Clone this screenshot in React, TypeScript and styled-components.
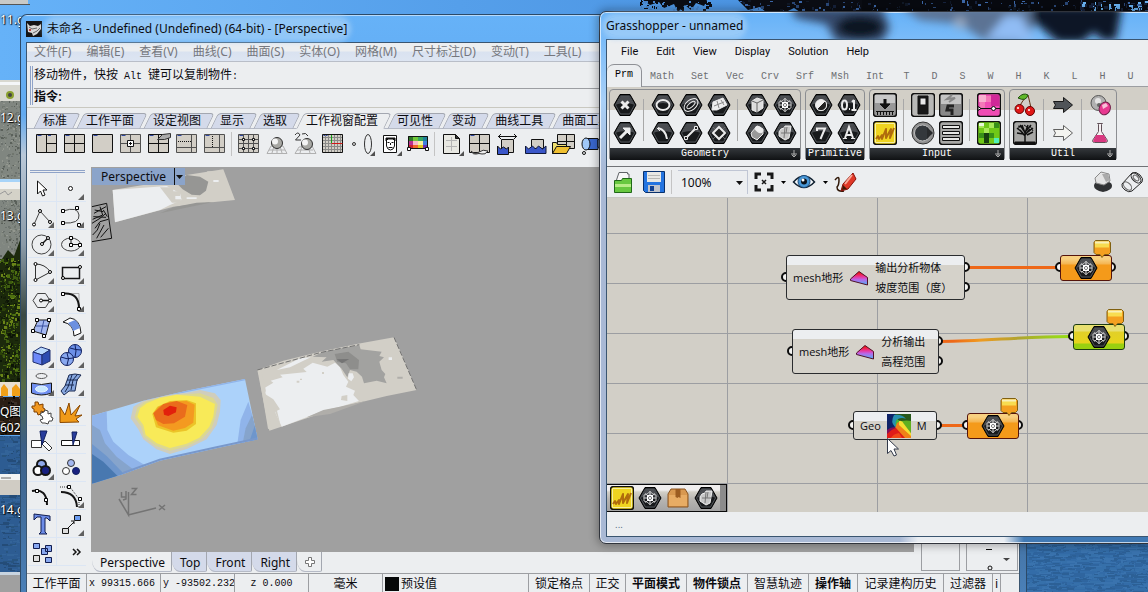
import React from "react";
import styled, { createGlobalStyle, css } from "styled-components";

const GlobalStyle = createGlobalStyle`
  * { box-sizing: border-box; }
  html, body { margin: 0; height: 100%; overflow: hidden; }
  body { font: 12px/16px "Noto Sans", "Noto Sans CJK SC", sans-serif; color: #0c0c10; }
  button, input, select { font: inherit; color: inherit; margin: 0; padding: 0; border: 0; background: none; }
  svg { display: block; }
`;

const ui = `"Noto Sans", "Noto Sans CJK SC", sans-serif`;
const song = `"Liberation Sans", "Noto Sans CJK SC", sans-serif`;
const face = "#eceef0";
const line = "#9c9ea2";
const stone = "#d2cfc7";

/* ---------- desktop ---------- */

const Desktop = styled.main`
  position: relative;
  height: 100vh;
  overflow: hidden;
  background: #5fa9f2;
`;

const Wallpaper = styled.svg`
  position: absolute;
  inset: 0;
  width: 100%;
  height: 100%;
`;

const DesktopLabel = styled.span<{ $top: number }>`
  position: absolute;
  left: 0;
  top: ${(p) => p.$top}px;
  color: #fff;
  text-shadow: 0 0 2px #000, 1px 1px 1px #000;
  white-space: nowrap;
`;

/* ---------- shared window parts ---------- */

const Frame = styled.section`
  position: absolute;
  display: flex;
  flex-direction: column;
  border: 1px solid #2c4a68;
  border-radius: 7px 7px 0 0;
`;

const RhinoFrame = styled(Frame)`
  left: 20px;
  top: 14px;
  right: 121px;
  bottom: -2px;
  padding: 0 6px 0 5px;
  border-bottom: 0;
  background:
    linear-gradient(#ffffff88, #ffffff88) 0 0 / 100% 1px no-repeat,
    linear-gradient(#66b2f8 0, #62aaf0 100px, #b9c8d8 140px, #8a9aa8 230px, #3a4a44 300px, #566b46 370px, #3c5f86 430px, #4a80b8 578px);
`;

const GrassFrame = styled(Frame)`
  left: 599px;
  top: 11px;
  right: -8px;
  bottom: 48px;
  padding: 0 6px 6px;
  border-color: #30343c;
  border-radius: 7px;
  box-shadow: 0 0 9px 2px rgba(0, 0, 0, 0.3), inset 0 0 0 1px #ffffffb0;
  background:
    linear-gradient(90deg, #a9b9d5 300px, #e9edf2 318px, #e9edf2 404px, #4079b4 424px) 0 100% / 100% 7px no-repeat,
    linear-gradient(#66b2f8, #a9d0f8 90px, #a9b9d5 160px);
`;

const TitleBar = styled.header<{ $h: number }>`
  position: relative;
  display: flex;
  align-items: center;
  gap: 5px;
  height: ${(p) => p.$h}px;
  flex: none;
  white-space: nowrap;
`;

const TitleText = styled.h1`
  position: relative;
  margin: 0;
  font: 12px/18px ${ui};
  border-radius: 9px;
  background: #a8d2f8aa;
  box-shadow: 0 0 5px 4px #a8d2f8aa;
`;

const TitleGlass = styled.svg`
  position: absolute;
  left: 0;
  top: 0;
  width: 100%;
  height: 100%;
`;

const Client = styled.div`
  display: flex;
  flex-direction: column;
  flex: 1;
  min-height: 0;
  border: 1px solid #3a5570;
  border-bottom-width: 0;
  background: ${face};
`;

const GrassClient = styled(Client)`
  border-bottom-width: 1px;
`;

const IconButton = styled.button<{ $w?: number; $h?: number }>`
  display: flex;
  align-items: center;
  justify-content: center;
  flex: none;
  width: ${(p) => p.$w ?? 28}px;
  height: ${(p) => p.$h ?? 28}px;
`;

/* ---------- Rhino ---------- */

const RhinoMenu = styled.nav`
  display: flex;
  gap: 15px;
  height: 19px;
  flex: none;
  padding: 0 7px;
  border-bottom: 1px solid #b9bec8;
  background: linear-gradient(#eceef0 8px, #d9e2f0 9px, #dde5f2);
  overflow: hidden;
  white-space: nowrap;
  color: #75777d;
  line-height: 18px;
`;

const MenuButton = styled.button`
  flex: none;
`;

const CommandArea = styled.form`
  display: flex;
  flex-direction: column;
  flex: none;
  height: 46px;
  padding-left: 3px;
  border-bottom: 1px solid #c9c8c0;
`;

const CommandGrip = styled.div`
  display: flex;
  flex-direction: column;
  flex: 1;
  margin: 4px 0 2px;
  padding-left: 1px;
  border-left: 3px double #8fa3c8;
  font-family: ${song};
`;

const History = styled.div`
  height: 23px;
  padding: 0 0 2px;
  border-bottom: 1px solid ${line};
  line-height: 18px;
  white-space: nowrap;
`;

const Mono = styled.span`
  font: 10px/16px "Liberation Mono", monospace;
  white-space: pre;
`;

const Prompt = styled.label`
  display: flex;
  align-items: center;
  gap: 4px;
  height: 15px;
  font-weight: 700;
`;

const CommandInput = styled.input`
  flex: 1;
  outline: 0;
`;

const TabStrip = styled.div`
  display: flex;
  flex: none;
  height: 21px;
  padding: 5px 0 0 8px;
  overflow: hidden;
  box-shadow: inset 0 -1px #b5bac6;
`;

const ToolTab = styled.button<{ $on?: boolean }>`
  position: relative;
  flex: none;
  height: 16px;
  padding: 0 11px 0 8px;
  font: 12px/16px ${song};
  z-index: ${(p) => (p.$on ? 1 : 0)};
  isolation: isolate;
  &::before {
    content: "";
    position: absolute;
    z-index: -1;
    inset: 0 1px 0 2px;
    transform: skewX(-26deg);
    border: 1px solid #a3a7b0;
    border-bottom-color: ${(p) => (p.$on ? face : "#b5bac6")};
    border-radius: 4px 4px 0 0;
    background: ${(p) => (p.$on ? face : "#d4daea")};
  }
`;

const Toolbar = styled.div`
  display: flex;
  align-items: center;
  flex: none;
  height: 31px;
  padding: 0 0 2px 6px;
  overflow: hidden;
`;

const ToolSep = styled.i`
  flex: none;
  width: 1px;
  height: 24px;
  margin: 0 3px 0 2px;
  background: #c4c4c4;
`;

const RhinoBody = styled.div`
  display: flex;
  flex: 1;
  min-height: 0;
`;

const ToolBox = styled.div`
  flex: none;
  width: 64px;
  padding: 10px 0 0 1px;
`;

const ToolRule = styled.div`
  height: 3px;
  margin: 0 6px 1px 2px;
  border: solid #8fa3c8;
  border-width: 1px 0;
`;

const ToolGrid = styled.div`
  display: grid;
  grid-template-columns: 29px 29px;
  grid-auto-rows: 28px;
`;

const ToolCell = styled.button`
  display: flex;
  align-items: center;
  justify-content: center;
  border-bottom: 1px solid #dce6f4;
  &:nth-child(odd) { border-right: 1px solid #dce6f4; }
`;

const ViewColumn = styled.div`
  display: flex;
  flex-direction: column;
  flex: 1;
  min-width: 0;
  padding-top: 7px;
`;

const Viewport = styled.div`
  position: relative;
  flex: 1;
  overflow: hidden;
  background: #a0a0a0;
`;

const ViewLabel = styled.div`
  position: absolute;
  left: 1px;
  top: 1px;
  display: flex;
  height: 17px;
  background: #8ba4ca;
  line-height: 17px;
`;

const ViewName = styled.span`
  padding: 0 8px 0 9px;
  border-right: 1px solid #111;
`;

const ViewTabs = styled.div`
  display: flex;
  flex: none;
  height: 21px;
  padding-left: 1px;
  line-height: 20px;
`;

const ViewTab = styled.button<{ $on?: boolean }>`
  flex: none;
  height: 20px;
  padding: 1px 6px 0 8px;
  border-right: 1px solid #a3a7b0;
  border-bottom: 1px solid #b5bac6;
  border-bottom-left-radius: 8px 12px;
  border-bottom-right-radius: 2px;
  background: ${(p) => (p.$on ? face : "#d4daea")};
`;

const SidePanels = styled.div`
  display: flex;
  align-items: flex-end;
  flex: none;
  gap: 6px;
  width: 105px;
  padding: 0 1px 2px 7px;
`;

const SidePanel = styled.div<{ $w: number }>`
  width: ${(p) => p.$w}px;
  height: 60px;
  border: 1px solid ${line};
  background: ${face};
`;

const StatusBar = styled.footer`
  display: flex;
  flex: none;
  height: 21px;
  border-top: 1px solid ${line};
  font: 12px/21px ${song};
  white-space: nowrap;
  overflow: hidden;
`;

const statusCell = css<{ $w: number; $bold?: boolean; $left?: boolean }>`
  flex: none;
  display: flex;
  align-items: center;
  gap: 2px;
  justify-content: ${(p) => (p.$left ? "flex-start" : "center")};
  width: ${(p) => p.$w}px;
  padding: 0 2px;
  border-right: 1px solid ${line};
  font-weight: ${(p) => (p.$bold ? 700 : 400)};
  overflow: hidden;
`;

const StatusCell = styled.span`${statusCell}`;
const StatusToggle = styled.button`${statusCell}`;

const Swatch = styled.i`
  width: 14px;
  height: 14px;
  background: #060808;
`;

/* ---------- Grasshopper ---------- */

const GrassMenu = styled.nav`
  display: flex;
  gap: 18px;
  flex: none;
  height: 23px;
  padding: 0 14px;
  font: 11px/24px Roboto, sans-serif;
`;

const Categories = styled.div`
  display: flex;
  flex: none;
  height: 24px;
  padding-top: 1px;
  overflow: hidden;
  box-shadow: inset 0 -1px ${line};
`;

const Category = styled.button<{ $on?: boolean }>`
  flex: none;
  min-width: 28px;
  height: 23px;
  padding: 1px 8px 0;
  border: solid transparent;
  border-width: 1px 1px 0 0;
  font: 10px/16px "Liberation Mono", monospace;
  color: #6c6e72;
  ${(p) =>
    p.$on &&
    css`
      padding-top: 0;
      padding-bottom: 2px;
      border-color: #8f9196;
      border-radius: 7px 7px 0 0;
      background: ${face};
      color: #000;
    `}
`;

const Ribbon = styled.div`
  display: flex;
  align-items: flex-start;
  gap: 4px;
  flex: none;
  height: 80px;
  padding: 2px;
  border-bottom: 1px solid #707276;
  background: linear-gradient(${stone} 23px, ${face} 23px);
`;

const RibbonPanel = styled.section`
  flex: none;
  height: 71px;
  padding: 1px;
  border: 1px solid #8c8e92;
  border-radius: 4px 4px 2px 2px;
`;

const RibbonIcons = styled.div`
  display: flex;
  height: 56px;
`;

const RibbonGroup = styled.div<{ $cols: number }>`
  display: grid;
  grid-auto-flow: row;
  grid-template-columns: repeat(${(p) => p.$cols}, 28px);
  grid-template-rows: 28px 28px;
  & + & {
    padding-left: 10px;
    background: linear-gradient(#a8a8a8, #a8a8a8) 4px 8px / 1px 42px no-repeat;
  }
`;

const RibbonTitle = styled.h2`
  position: relative;
  margin: 1px -1px 0;
  height: 12px;
  background: linear-gradient(#34383c, #101214);
  color: #fff;
  text-align: center;
  font: 10px/11px "Liberation Mono", monospace;
`;

const More = styled.button`
  position: absolute;
  right: 2px;
  top: 2px;
`;

const CanvasBar = styled.div`
  display: flex;
  align-items: center;
  flex: none;
  height: 31px;
  padding: 0 2px 0 0;
  border-bottom: 1px solid #c8c8c4;
`;

const Grow = styled.div`
  flex: 1;
`;

const ZoomBox = styled.label`
  position: relative;
  display: flex;
  align-items: center;
  width: 70px;
  height: 24px;
  margin: 0 2px 0 3px;
  border: solid #c0c6d4;
  border-width: 1px 1px 0 0;
  & select {
    width: 100%;
    height: 22px;
    padding-left: 3px;
    appearance: none;
    outline: 0;
  }
  & svg {
    position: absolute;
    right: 4px;
    top: 10px;
    pointer-events: none;
  }
`;

const Canvas = styled.div`
  position: relative;
  flex: 1;
  overflow: hidden;
  background:
    linear-gradient(90deg, ${line} 1px, transparent 1px) 120px 0 / 150px 100%,
    linear-gradient(${line} 1px, transparent 1px) 0 35px / 100% 50px,
    ${stone};
`;

const CanvasLayer = styled.svg`
  position: absolute;
  inset: 0;
  width: 100%;
  height: 100%;
  pointer-events: none;
`;

const NodeBox = styled.article<{ $x: number; $y: number; $w: number; $h: number }>`
  position: absolute;
  left: ${(p) => p.$x}px;
  top: ${(p) => p.$y}px;
  width: ${(p) => p.$w}px;
  height: ${(p) => p.$h}px;
  display: flex;
  align-items: center;
  justify-content: space-between;
  gap: 6px;
  padding: 0 6px;
  border: 1px solid #2a2c2e;
  border-radius: 3px;
  background: linear-gradient(${face} 9px, #d5d2ca 9px);
  font: 11px/20px "Open Sans", "Noto Sans CJK SC", sans-serif;
  white-space: nowrap;
`;

const Outputs = styled.div`
  display: flex;
  flex-direction: column;
  flex: 1;
`;

const ParamBox = styled.article<{ $x: number; $y: number; $selected?: boolean }>`
  position: absolute;
  left: ${(p) => p.$x}px;
  top: ${(p) => p.$y}px;
  display: flex;
  align-items: center;
  justify-content: center;
  width: 52px;
  height: 26px;
  border: 1px solid ${(p) => (p.$selected ? "#1c3c10" : "#54140c")};
  border-radius: 3px;
  background: ${(p) =>
    p.$selected
      ? "linear-gradient(#e8e070 6px, #e2d028 7px, #e6d41c 18px, #98d010 19px)"
      : "linear-gradient(#f8d080 3px, #f4b450 8px, #f49a1a 9px, #f49a1a)"};
`;

const Recent = styled.div`
  position: absolute;
  left: 0;
  bottom: 0;
  display: flex;
  align-items: center;
  width: 120px;
  height: 28px;
  padding-left: 1px;
  border: 1px solid #0a0a0a;
  border-left: 0;
  background: linear-gradient(90deg, transparent 113px, #8c8c8c 113px), linear-gradient(#f0eeee 5px, ${stone} 7px, #b8b6b2 14px, #a4a4a4);
`;

const GrassStatus = styled.footer`
  flex: none;
  height: 24px;
  padding: 0 8px;
  font: 10px/26px Roboto, sans-serif;
  color: #5a7088;
`;

/* ---------- drawings ---------- */

const rand = (seed: number) => () => {
  seed = (seed * 16807) % 2147483647;
  return seed / 2147483647;
};

const Specks = ({ seed, n, x, y, w, h, colors, s = 2, sx = 1 }: {
  seed: number; n: number; x: number; y: number; w: number; h: number; colors: string[]; s?: number; sx?: number;
}) => {
  const r = rand(seed);
  return (
    <g>
      {Array.from({ length: n }, (_, i) => (
        <rect
          key={i}
          x={Math.round(x + r() * w)}
          y={Math.round(y + r() * h)}
          width={Math.ceil(r() * s * sx)}
          height={Math.ceil(r() * s)}
          fill={colors[Math.floor(r() * colors.length)]}
        />
      ))}
    </g>
  );
};

const Scenery = () => (
  <Wallpaper aria-hidden>
    <defs>
      <linearGradient id="sky" x1="0" x2="1">
        <stop offset="0" stopColor="#66b2f8" />
        <stop offset=".4" stopColor="#559fea" />
        <stop offset="1" stopColor="#3f86d8" />
      </linearGradient>
    </defs>
    <rect width="100%" height="100" fill="url(#sky)" />
    <rect width="28" height="4" fill="#c9cac8" />
    <rect y="4" width="30" height="1" fill="#555" />
    <rect y="100" width="24" height="160" fill="#808680" />
    <Specks seed={7} n={520} x={0} y={100} w={22} h={160} s={2} colors={["#6c726e", "#949890", "#70766e", "#868c84", "#5a605a"]} />
    <path d="M0 262L8 250L14 256L22 235V392H0z" fill="#1c2a0c" />
    <Specks seed={11} n={560} x={0} y={258} w={22} h={130} s={3} colors={["#0c1406", "#3e5c10", "#4e7010", "#2c4208", "#6a8418", "#1a280a", "#141e08"]} />
    <rect y="382" width="24" height="14" fill="#e8e0d0" />
    <path d="M1 396V388l3-4l4 5v7zM12 396v-8l4-4l4 5v7z" fill="#f0a018" />
    <rect y="397" width="24" height="38" fill="#2a1e14" />
    <Specks seed={5} n={60} x={0} y={396} w={22} h={38} s={3} colors={["#0a0806", "#5a4030", "#3c3028"]} />
    <rect y="436" width="100%" height="160" fill="#2d5c92" />
    <Specks seed={3} n={260} x={0} y={436} w={22} h={156} s={2} sx={4} colors={["#28547f", "#336499", "#244c78"]} />
    <rect x="1020" y="530" width="100%" height="80" fill="#336ca8" />
    <Specks seed={21} n={1100} x={1024} y={542} w={128} h={52} s={2} sx={6} colors={["#2f659f", "#3a73ae", "#2c6096", "#3670aa"]} />
    <g>
      <rect x="-2" y="80" width="22" height="21" fill="#d8d8d0" />
      <rect x="-2" y="82" width="22" height="3" fill="#f4f6f8" />
      <circle cx="10" cy="95" r="4" fill="#8aa030" /><circle cx="10" cy="95" r="2" fill="#444" />
      <rect x="-2" y="180" width="22" height="20" fill="#d4d2c8" />
      <rect x="-2" y="179" width="22" height="3" fill="#a8d4f8" />
      <rect x="-2" y="182" width="22" height="7" fill="#f2f2f0" />
      <path d="M0 194l5-3l3 4l4-3" stroke="#999" fill="none" />
      <rect x="-2" y="474" width="22" height="21" fill="#d0ccc4" />
      <rect x="-2" y="474" width="22" height="6" fill="#f2f4f4" />
      <path d="M1 478h10" stroke="#666" />
      <rect x="-2" y="573" width="22" height="19" fill="#a0a0a0" />
      <rect x="-2" y="572" width="22" height="3" fill="#c8d4e0" />
    </g>
    <path d="M643 0h64l-3 6-8-3-5 7-6-5-7 7-4-8-10 4-5-6-9 3zM738 0H1148V12H800l-6-4-8 4H766l-6-5-12 3z" fill="#0b0d14" />
    <rect x="862" width="300" height="13" fill="#080a10" />
    <Specks seed={31} n={150} x={740} y={0} w={408} h={11} s={3} colors={["#2a4878", "#16223c", "#3c68a8", "#101826"]} />
    <Specks seed={17} n={60} x={640} y={0} w={70} h={9} s={3} colors={["#0b0d14", "#4a88d0"]} />
    <Specks seed={13} n={50} x={1080} y={0} w={68} h={9} s={4} colors={["#6ab4f4", "#16223c"]} />
  </Wallpaper>
);

const RhinoLogo = () => (
  <svg width="16" height="16" viewBox="0 0 16 16">
    <rect width="16" height="16" fill="#141414" />
    <path d="M1 2l3 3 4-1 4 1 3-2v5l-4 5-4 2-1-3-4-1z" fill="#d8d8d6" />
    <path d="M3 6l3 2 5-1M7 12l4-2 3-3" stroke="#666" fill="none" />
    <path d="M3 8h2v2H3z" fill="#c04040" />
  </svg>
);

const Pane = ({ children, dim }: { children?: React.ReactNode; dim?: boolean }) => (
  <svg width="24" height="24" viewBox="0 0 24 24" fill="none" stroke={dim ? "#505050" : "#111"}>
    <path d="M1.5 2.5h20v18h-20z" fill="#d2cec6" />
    <path d="M2.5 3.5h4" stroke="#3048a0" />
    {children}
  </svg>
);

const Water = () => <path d="M1.500 14l3 3 4-3 3 3 3-3 4 3 3.500-3v7.500h-20.500z" fill="#3a56c8" stroke="#101838" />;

const topTools: { name: string; w?: number; icon: React.ReactNode }[] = [
  { name: "三个工作视窗", icon: <Pane><path d="M11.5 2.5v18M11.5 11.5h10" /><path d="M13 3.500h3" stroke="#3048a0" /></Pane> },
  { name: "四个工作视窗", icon: <Pane><path d="M11.5 2.5v18M1.5 11.5h20" /></Pane> },
  { name: "最大化", icon: <Pane /> },
  { name: "新增", icon: <Pane dim><path d="M11.5 2.5v18M1.5 11.5h20" /><path d="M8.5 8.5h6v6h-6z" fill="#fff" stroke="#111" /><path d="M10 11.5h3M11.5 10v3" stroke="#111" /></Pane> },
  { name: "属性", icon: <Pane><path d="M11.5 2.5v18M1.5 11.5h20" /><path d="M10.500 7.500l5-5 8-1v4l-6 2z" fill="#aaa" stroke="#333" /></Pane> },
  { name: "水平分割", icon: <Pane dim><path d="M16.5 2.5v18M1.5 15.5h20" /><path d="M3 9.5h13" stroke="#111" strokeDasharray="1 1" /></Pane> },
  { name: "垂直分割", icon: <Pane dim><path d="M16.5 2.5v18M1.5 15.5h20" /><path d="M9.500 4v11" stroke="#111" strokeDasharray="1 1" /></Pane> },
  { name: "|", icon: null },
  { name: "锁定", icon: <Pane dim><path d="M6.5 2.5v18M16.500 2.5v18M1.500 7.5h20M1.500 16.500h20M11.500 3v17M2 11.500h19" /><path d="M5.500 6.500h2v2h-2zM15.500 6.500h2v2h-2zM5.500 15.500h2v2h-2zM15.500 15.500h2v2h-2z" fill="#fff" stroke="#111" /></Pane> },
  { name: "着色", icon: <svg width="24" height="24" viewBox="0 0 24 24"><path d="M6 14L2 21.500h20L18 14zM4 18h16M9 14L7 21M15 14l2 7M12 14v7" stroke="#b0b0b0" fill="none" /><circle cx="12" cy="11" r="5.500" fill="#a8a8a4" stroke="#303030" /><circle cx="10" cy="9.500" r="3" fill="#f4f4f4" /></svg> },
  { name: "复制显示", icon: <svg width="24" height="24" viewBox="0 0 24 24"><path d="M6 15L2 21.500h21L19 14zM4 18h16M9 14L7 21M15 14l2 7" stroke="#b0b0b0" fill="none" /><path d="M2 3q3-4 5 0L2.500 8H8M9 2q4-2 6 2" stroke="#333" fill="none" /><circle cx="14" cy="12" r="5.500" fill="#a8a8a4" stroke="#303030" /><circle cx="12" cy="10.500" r="3" fill="#f4f4f4" /></svg> },
  { name: "网格线", icon: <Pane><path d="M4.500 3v17M7.500 3v17M10.500 3v17M13.500 3v17M16.500 3v17M19.500 3v17M2 5.500h19M2 8.500h19M2 11.500h19M2 14.500h19M2 17.500h19" stroke="#8a8a88" /><path d="M10.500 3v8" stroke="#18a018" /><path d="M10.500 11.500h11" stroke="#d01818" /></Pane> },
  { name: "点", w: 14, icon: <svg width="10" height="24"><circle cx="5" cy="12" r="1.500" fill="#ddd" stroke="#333" /></svg> },
  { name: "镜头", w: 16, icon: <svg width="16" height="28" fill="none"><ellipse cx="7" cy="14" rx="3.500" ry="9.500" stroke="#333" /><path d="M14 21v5H9z" fill="#505050" /></svg> },
  { name: "图像", w: 27, icon: <svg width="26" height="28" fill="none" stroke="#111"><path d="M5.500 5.500h13v17h-13z" fill="#fff" /><path d="M8.500 10v6q1 4 4 4t4-4v-6" /><path d="M8 8h9v3l-2-2h-5l-2 2z" fill="#111" /><path d="M9.500 12.500h2M13.500 12.500h2M12.500 13v2M10.500 17.500h4" /><path d="M24 21v5h-5z" fill="#505050" stroke="none" /></svg> },
  { name: "背景图", icon: <svg width="24" height="24" viewBox="0 0 24 24"><path d="M2 4h5v5H2z" fill="#307828" /><path d="M7 4h5v5H7z" fill="#70c838" /><path d="M12 4h5v5h-5z" fill="#38a860" /><path d="M17 4h5v5h-5z" fill="#208098" /><path d="M2 9h5v4H2z" fill="#b83090" /><path d="M7 9h5v4H7z" fill="#f8b8c8" /><path d="M12 9h5v4h-5z" fill="#f8f0a0" /><path d="M17 9h5v4h-5z" fill="#4080e0" /><path d="M2 13h5v4H2z" fill="#c82030" /><path d="M7 13h5v4H7z" fill="#f06828" /><path d="M12 13h5v4h-5z" fill="#e0c820" /><path d="M17 13h5v4h-5z" fill="#7030b0" /><path d="M2.500 4.500h19v12h-19z" fill="none" stroke="#111" /><path d="M1.500 15.500h3v3h-3zM19.500 15.500h3v3h-3z" fill="#fff" stroke="#111" /></svg> },
  { name: "|", icon: null },
  { name: "新页面", icon: <svg width="28" height="28" fill="none" stroke="#111"><path d="M5.500 4.500h12l4 4v15h-16z" fill="#e8e8e2" /><path d="M17.500 4.500v4h4z" fill="#333" /><path d="M8 10.500h11M8 16.500h11M13.500 7v14" stroke="#b4b4b4" /><path d="M26 21v5h-5z" fill="#505050" stroke="none" /></svg> },
  { name: "同步", icon: <Pane><path d="M11.500 2.500v18M1.500 11.500h20" /><path d="M3 19q4 4 8 1t9-1q-3 4-6 3t-6 0-5-3z" fill="#eee" stroke="#333" /></Pane> },
  { name: "宽度", icon: <svg width="24" height="24" fill="none" stroke="#111"><path d="M2 4.500h19M5 2L2.500 4.500L5 7M18 2l2.500 2.500L18 7" /><path d="M5.500 7.500h12v13h-12z" fill="#d2cec6" /><path d="M1.500 14l3 3 3-2 3 2 2-2v7.500h-11z" fill="#3a56c8" /></svg> },
  { name: "底部", icon: <svg width="24" height="24" fill="none" stroke="#111"><path d="M7.500 7.500h12v9h-12z" fill="#d2cec6" /><Water /></svg> },
  { name: "打开", icon: <svg width="26" height="24" fill="none" stroke="#111"><path d="M6.500 2.500h17v14h-17zM15.500 3v13M7 9.500h17" fill="#d2cec6" /><path d="M1.500 10.500h4l1 2h9v9h-14z" fill="#f0e070" /><path d="M1.500 21.500l4-7h14l-4 7z" fill="#f0c030" /></svg> },
  { name: "摄像机", icon: <svg width="26" height="24" fill="none" stroke="#111"><path d="M8 6.500h11v11H8z" fill="#3a68d0" /><path d="M19 8l5-4v14l-5-3z" fill="#88b0e8" /><ellipse cx="7" cy="12" rx="4" ry="6" fill="#a0c8f8" /><circle cx="5" cy="21" r="1.500" /></svg> },
];

const Cell = ({ children, corner = true }: { children: React.ReactNode; corner?: boolean }) => (
  <svg width="28" height="28" viewBox="0 0 28 28" fill="none" stroke="#151515">
    {children}
    {corner && <path d="M26 20v6h-6z" fill="#606060" stroke="none" />}
  </svg>
);

const Sq = ({ p }: { p: number[][] }) => (
  <>{p.map(([x, y]) => <path key={`${x}-${y}`} d={`M${x - 1.5} ${y - 1.5}h3v3h-3z`} fill="#fff" stroke="#000" />)}</>
);

const Dots = ({ p }: { p: number[][] }) => (
  <>{p.map(([x, y]) => <circle key={`${x}-${y}`} cx={x} cy={y} r="1.500" fill="#fff" stroke="#000" />)}</>
);

const sideTools: [string, React.ReactNode][] = [
  ["选取", <Cell corner={false}><path d="M9.500 7v13l3-3 2 5 2.500-1-2-5h4z" fill="#fff" /></Cell>],
  ["点", <Cell><circle cx="12.500" cy="14.500" r="2" fill="#fff" /></Cell>],
  ["多重直线", <Cell><path d="M6 22.500L12 9l10 11" stroke="#444" /><Dots p={[[6, 22.5], [12, 9], [22, 20]]} /></Cell>],
  ["曲线", <Cell><path d="M5 9q15-5 16 4t-16 8" stroke="#444" /><Sq p={[[5, 9], [19, 6], [5, 21], [21, 23]]} /></Cell>],
  ["圆", <Cell><circle cx="13.500" cy="14.500" r="9.500" stroke="#444" /><path d="M14 14l6-6" strokeWidth="1.500" /><Dots p={[[14, 14], [20, 8]]} /></Cell>],
  ["椭圆", <Cell><ellipse cx="13" cy="14.500" rx="9.500" ry="6.500" stroke="#444" /><path d="M13 14.500h9M13 14V8" /><Sq p={[[13, 15], [22, 15], [13, 8]]} /></Cell>],
  ["圆弧", <Cell><path d="M7.500 6v16l15-8Q17 6 7.500 6" stroke="#333" /><Dots p={[[7.5, 6], [7.5, 22], [22, 14]]} /></Cell>],
  ["矩形", <Cell><path d="M4.500 9.500h17v11h-17z" strokeWidth="1.500" /><Dots p={[[5, 20], [22, 9]]} /></Cell>],
  ["多边形", <Cell><path d="M9.500 7.500h8l4.500 7-4.500 7h-8L5 14.500z" stroke="#444" /><path d="M13 14.500h9" strokeWidth="1.500" /><Dots p={[[13, 14.5], [22, 14.5]]} /></Cell>],
  ["圆角", <Cell><path d="M6 7.500h15v15" stroke="#aaa" /><path d="M6 7.500q15-1 15 15" strokeWidth="2" /><Sq p={[[5, 8], [21, 23]]} /></Cell>],
  ["曲面", <Cell><path d="M10 6h12l-4 15L5 17z" fill="#a4b8f0" /><path d="M16 6l-3 13M8 12h12" stroke="#3850a0" /><Sq p={[[9, 6], [21, 6], [16, 22], [5, 17]]} /></Cell>],
  ["弯曲", <Cell><path d="M5 8l7-4q10 1 11 15l-7 3q0-12-11-14z" fill="#fff" /><path d="M10 9l7-3q4 3 5 8l-7 3q-1-5-5-8z" fill="#6c90e0" stroke="none" /></Cell>],
  ["立方体", <Cell><path d="M5 10l8-5 9 3-8 5z" fill="#b8d8fc" stroke="#203070" /><path d="M5 10l9 3v10l-9-3z" fill="#6c88f8" stroke="#203070" /><path d="M14 13l8-5v11l-8 4z" fill="#2c4cb0" stroke="#203070" /></Cell>],
  ["球体", <Cell><circle cx="17" cy="9" r="6.500" fill="#6c90e8" stroke="#102060" /><path d="M12 6q6 2 11 2M17 3q2 6 0 12" stroke="#102060" /><circle cx="9" cy="17" r="6.500" fill="#88a8f0" stroke="#102060" /><path d="M3 15q6 3 12 1M9 11q3 6 0 12" stroke="#102060" /></Cell>],
  ["投影", <Cell><ellipse cx="13.500" cy="6" rx="5.500" ry="2.500" stroke="#555" /><path d="M3.500 13q10 3 20 0v10q-10 4-20 0z" fill="#6f8ff0" /><ellipse cx="13.500" cy="19" rx="6" ry="3" fill="#c8e8ff" stroke="#e8f4ff" /></Cell>],
  ["网格", <Cell><path d="M3 21l4-5 4-11 6-1 6 1-4 5-2 11-6 0-5 4z" fill="#88a8e0" stroke="#182850" /><path d="M7 15h9M9 10h11M14 5l-4 12-3 5M19 5l-4 5-2 10" stroke="#182850" /></Cell>],
  ["拼图", <Cell corner={false}><path d="M4 8l3 0 0-4 3 0 1 3 4-1 0 4 2 1-1 3-3-1 0 3-3 1-1-3-3 0 0-3-2-1z" fill="#f09820" stroke="#804000" /><path d="M13 15l3-1 1-2 3 1 0 3 3-1 0 4 2 1-1 3-3 0-1 3-3-1-3 0-2-3 3-1-1-3-2-1z" fill="#fff" stroke="#444" /></Cell>],
  ["炸开", <Cell corner={false}><path d="M2 24.500V9l5 8 4-12 2 12 9-10-5 11 7-1-6 4 3 3-19 .5z" fill="#f09a18" stroke="#8a4800" /></Cell>],
  ["修剪", <Cell corner={false}><path d="M3.500 14.500h10v7h-10zM14 18l3-3 7 7-3 3z" fill="#fff" stroke="#333" /><path d="M12 5h7l-5 14z" fill="#283c9c" stroke="#102060" /></Cell>],
  ["分割", <Cell corner={false}><path d="M3.500 14.500h18v5h-18z" fill="#fff" /><path d="M14 6h5l-4 13z" fill="#283c9c" stroke="#102060" /></Cell>],
  ["群组", <Cell><circle cx="13.500" cy="10.500" r="4.500" fill="#90a8e8" strokeWidth="2" /><circle cx="10" cy="16.500" r="4.500" fill="#fff" strokeWidth="2" /><circle cx="17.500" cy="16.500" r="4.500" fill="#182080" strokeWidth="2" /></Cell>],
  ["解散群组", <Cell corner={false}><circle cx="13" cy="9" r="3.500" fill="#a4b8f0" stroke="#333" /><circle cx="8" cy="17" r="3.500" fill="#fff" stroke="#333" /><circle cx="18" cy="17" r="3.500" fill="#182080" stroke="#102060" /></Cell>],
  ["编辑点", <Cell corner={false}><path d="M4 9q15-3 15 14" strokeWidth="2" /><Sq p={[[9, 9], [18, 18]]} /></Cell>],
  ["控制点", <Cell><path d="M3 10q15 0 16 15" strokeWidth="2" /><path d="M2 5h10l9 12v8" strokeDasharray="1 1" stroke="#333" /><Sq p={[[11, 5], [22, 17]]} /></Cell>],
  ["文字", <Cell corner={false}><path d="M6 4l16 2v5l-3-3-2 0v14l2 2h-8l2-2V7L9 7 6 10z" fill="#6c8ce8" stroke="#101c50" /></Cell>],
  ["移动", <Cell><path d="M10 18l6-6M13 11h3v3" /><path d="M4.500 18.500h6v5h-6z" fill="#ddd" /><path d="M16.500 5.500h6v5h-6z" fill="#6c9cf0" /></Cell>],
  ["阵列", <Cell corner={false}><path d="M5.500 5.500h6v5h-6zM17.500 7.500h6v6h-6zM13.500 10.500h6v6h-6zM17.500 19.500h6v5h-6z" fill="#88a8f0" stroke="#101c50" /><path d="M5.500 17.500h6v6h-6z" fill="#ddd" /></Cell>],
  ["更多", <Cell corner={false}><path d="M15 11l3 3-3 3M19 11l3 3-3 3" strokeWidth="1.500" /></Cell>],
];

const Scene = () => (
  <CanvasLayer aria-hidden>
    <g transform="translate(-91 -167)">
      <g transform="translate(0 160) scale(.3333)">
        <path d="M338 90L430 75L560 45L670 28L705 120L620 128L520 140L345 187z" fill={stone} />
        <path d="M338 90L500 78L540 100L545 120L510 135L480 150L345 187z" fill={face} />
        <path d="M560 45L600 50L625 65L618 92L600 106L575 104L548 88L530 70zM480 160L520 142L590 128L640 126z" fill="#969694" />
        <path d="M480 82h40v12h20v14h-14v10h20l-10 10h-20zM620 34h30v8h-20zM640 60h20l-6 8z" fill={stone} />
        <path d="M640 60h16v6h-16zM560 112h30v5h-30z" fill={face} />
        <path d="M276 140L320 130L335 235L276 245M282 160L318 140M278 178L308 165L300 140M285 205L300 185L325 178M290 235L312 195M302 232L325 205M278 225L292 210L300 190M276 190L300 175L318 160M284 150L310 155M280 170L318 172M310 150L322 170" fill="none" stroke="#101010" strokeWidth="3" />
      </g>
      <clipPath id="heat"><path d="M276 137L430 92L560 62L735 27L773 208L650 235L480 272L370 312L276 341z" /></clipPath>
      <g transform="translate(0 370) scale(.3333)">
        <g clipPath="url(#heat)">
          <rect x="270" width="520" height="360" fill="#acd2fa" />
          <path d="M276 130L320 122L322 180L340 215L385 255L445 292L276 341z" fill="#90b4ea" />
          <path d="M276 165L300 180L315 220L350 260L405 302L276 345z" fill="#86a4cc" />
          <path d="M276 222L320 258L375 315L276 345z" fill="#6e96cc" />
          <path d="M276 252L310 275L355 320L276 345z" fill="#4878b0" />
          <path d="M745 95L722 150L712 222L780 212z" fill="#90b4ea" />
          <path d="M756 135L737 175L728 220L780 212z" fill="#86a4cc" />
          <path d="M765 165L748 215L780 212z" fill="#6e96cc" />
          <path d="M773 208L650 235L480 272L370 312" stroke="#7898cc" strokeWidth="12" fill="none" />
          <path d="M735 27L560 62L430 92" stroke="#90b4ea" strokeWidth="8" fill="none" />
          <path d="M430 92L500 75L560 68L600 60L645 70L662 90L660 125L650 165L620 208L560 237L510 252L470 238L430 208L415 178L392 145L400 110z" fill="#cfcdbc" />
          <path d="M434 96L480 82L530 74L600 70L640 84L653 105L645 145L635 175L605 207L562 229L510 242L468 228L432 200L424 170L404 142L412 113z" fill="#dcd890" />
          <path d="M440 100L480 84L530 74L600 80L645 102L640 140L628 170L598 203L560 221L510 234L470 220L437 195L430 165L412 140L420 115z" fill="#f8ea58" />
          <path d="M457 132L472 110L510 93L560 90L588 100L588 162L560 182L520 188L468 172z" fill="#ecc428" />
          <path d="M460 130L476 110L510 95L560 93L584 104L580 158L555 174L520 182L474 166z" fill="#f49a20" />
          <path d="M460 130L490 102L530 93L562 105L555 140L522 160L490 162L468 150z" fill="#ea6c1c" />
          <path d="M490 120L510 107L530 112L528 127L505 138L492 134z" fill="#e2200c" />
        </g>
      </g>
      <g transform="translate(240 320) scale(.3333)">
        <path d="M52 150L130 122L240 95L350 72L462 52L482 95L530 210L440 228L300 262L200 295L88 332z" fill={stone} />
        <path d="M72 205L100 188L92 182L128 172L120 164L200 156L190 146L218 128L262 140L285 128L300 142L310 165L325 185L318 200L345 212L340 225L357 243L300 260L250 272L200 292L125 320L105 275L120 268L100 238L75 222zM110 150L180 115L212 112L150 142z" fill={face} />
        <path d="M218 110L250 95L358 75L362 88L425 95L418 108L432 112L418 125L425 150L436 162L432 172L440 190L410 182L372 190L366 170L350 155L330 150L322 172L305 146L280 120L245 125L260 112z" fill="#a2a2a0" />
        <path d="M284 102L325 95L357 120L355 148L330 148L318 130L292 126z" fill="#8e8e8c" />
        <path d="M290 118L328 117L306 130z" fill="#747474" />
        <path d="M326 160h12l4 12-8 12-10-8zM446 112h10v8h-10z" fill={face} />
        <path d="M56 160L66 158L96 330L84 326zM305 228L322 225L322 243L303 240zM62 190L72 180L78 215L68 210zM110 268L100 260L122 318z" fill={stone} />
        <path d="M200 292L250 270L300 260L380 242L270 282zM472 170h16v6h-16z" fill="#b0aeaa" />
        <path d="M52 150L240 98L358 74M462 52L485 105L530 210" stroke="#707070" strokeWidth="3" fill="none" strokeDasharray="16 6" />
        <path d="M170 182h8v6h-8zM180 176h6v4h-6zM246 156h6v6h-6z" fill={stone} />
      </g>
      <g stroke="#747474" fill="none">
        <path d="M128.500 492V515L119 499M128 515L156 508" strokeWidth="1.500" />
        <path d="M131.500 488.500h5l-5 6h5M159 505l6 5M165 505l-6 5M121.500 492v5l4 0M126 491v8l-3 1" strokeWidth="1.500" />
      </g>
    </g>
  </CanvasLayer>
);

const Hex = ({ children }: { children: React.ReactNode }) => (
  <svg width="24" height="24" viewBox="0 0 24 24">
    <path d="M1 12L7 1.500h10L23 12l-6 10.500H7z" fill="#181a1c" stroke="#000" strokeLinejoin="round" />
    <path d="M3 11.500L8 3h8l5 8.500q-9-3-18 0z" fill="#4a4c50" />
    <path d="M2.500 12L7.500 3h9l5 9-5 9h-9z" fill="none" stroke="#505458" />
    <g fill="none" stroke="#ececec">{children}</g>
  </svg>
);

const MeshGlyph = () => (
  <Hex>
    <path d="M12 5v14M5.500 12h13M7.500 7.500l9 9M16.500 7.500l-9 9" />
    <path d="M12 5.500l-3 2.500M12 5.500l3 2.500M12 18.500l-3-2.500M12 18.500l3-2.500M9 8l-3 1v6l3 1M15 8l3 1v6l-3 1" stroke="#b8b8b8" />
    <path d="M9.500 9.500h5v5h-5z" stroke="#fff" />
  </Hex>
);
const PatchGlyph = () => <Hex><path d="M8 8l3-1 1-2h6l-2 12-4 2-6-4 0-4z" fill="#c8c8c8" stroke="#eee" /><path d="M12 6l-1 11M8 12h9M14 6l-1 6" stroke="#777" /></Hex>;

const Tile = ({ bg, children }: { bg: string; children?: React.ReactNode }) => (
  <svg width="24" height="24" viewBox="0 0 24 24" fill="none" stroke="#101010">
    <rect x=".5" y=".5" width="23" height="23" rx="3" fill={bg} strokeWidth="1.500" />
    {children}
  </svg>
);

const Scribble = () => (
  <Tile bg="#f0d420">
    <path d="M2.500 2.500h19v19h-19z" stroke="#f8f0a0" />
    <path d="M3 18l2-3 1 3 3-4v4l4-10v9l5-9-1 9 4-10" stroke="#b06c0c" strokeWidth="2" strokeLinejoin="round" />
  </Tile>
);

type RibbonItem = [string, React.ReactNode];
const ribbon: { title: string; more: boolean; groups: { cols: number; items: RibbonItem[] }[] }[] = [
  {
    title: "Geometry",
    more: true,
    groups: [
      { cols: 1, items: [
        ["Point", <Hex><path d="M8.500 8.500l7 7M15.500 8.500l-7 7" strokeWidth="3" /></Hex>],
        ["Vector", <Hex><path d="M7 17l7-7" strokeWidth="3" /><path d="M10 7h7v7z" fill="#eee" /></Hex>],
      ] },
      { cols: 3, items: [
        ["Circle", <Hex><ellipse cx="12" cy="12" rx="6.500" ry="5" strokeWidth="2" /></Hex>],
        ["Curve", <Hex><ellipse cx="12" cy="12" rx="8" ry="5" transform="rotate(-40 12 12)" /><ellipse cx="12" cy="12" rx="5" ry="2" transform="rotate(-40 12 12)" /></Hex>],
        ["Plane", <Hex><path d="M6 9l10-4 4 7-10 5-5 0z" fill="#eee" /><path d="M10 8l2 7M14 7l3 5M7 13l10-4" stroke="#888" /></Hex>],
        ["Arc", <Hex><path d="M7 7q8 2 9 11" strokeWidth="2" /><path d="M6 7l3 3" /></Hex>],
        ["Line", <Hex><path d="M7 17L17 7" strokeWidth="2" /><path d="M5.500 15.500h3v3h-3zM15.500 5.500h3v3h-3z" fill="#222" /></Hex>],
        ["Rectangle", <Hex><path d="M6 6l12 12M18 6L6 18" stroke="#666" /><path d="M12 6l6 6-6 6-6-6z" strokeWidth="2" fill="#222" /></Hex>],
      ] },
      { cols: 2, items: [
        ["Box", <Hex><path d="M7 8l5-3 6 2v8l-6 4-5-2z" fill="#ddd" /><path d="M7 8l5 2 6-3M12 10v9" stroke="#666" /></Hex>],
        ["Mesh", <MeshGlyph />],
        ["Brep", <Hex><path d="M6 12l6-7 6 3 0 5-6 6-5-3z" fill="#999" /><ellipse cx="14" cy="8.500" rx="4" ry="2.500" transform="rotate(35 14 8.500)" fill="#eee" /></Hex>],
        ["Surface", <PatchGlyph />],
      ] },
    ],
  },
  {
    title: "Primitive",
    more: false,
    groups: [
      { cols: 2, items: [
        ["Boolean", <Hex><circle cx="12" cy="12" r="5.500" fill="#eee" /><path d="M16 8a5.500 5.500 0 01-8 8z" fill="#222" /></Hex>],
        ["Number", <Hex><ellipse cx="7.500" cy="12" rx="2.500" ry="4.500" strokeWidth="2" /><path d="M17 7v10M15 9l2-2M14.500 17h5M12 16h1" strokeWidth="2" /></Hex>],
        ["Integer", <Hex><path d="M8 10V7.500h8L11.500 18" strokeWidth="2" /></Hex>],
        ["Text", <Hex><path d="M8 17l4-11 4 11M9 14h6" strokeWidth="2" /><path d="M6 17.500h4M14 17.500h4" /></Hex>],
      ] },
    ],
  },
  {
    title: "Input",
    more: true,
    groups: [
      { cols: 1, items: [
        ["Slider", <Tile bg="#989898"><path d="M2 2h20v8H2z" fill="#c8c8c8" stroke="none" /><path d="M12 6v6" strokeWidth="3" /><path d="M7 11h10l-5 5z" fill="#111" /><path d="M3 18.500h18M4.500 18v4M7.500 18v4M10.500 18v4M13.500 18v4M16.500 18v4M19.500 18v4" /></Tile>],
        ["Panel", <Scribble />],
      ] },
      { cols: 2, items: [
        ["Toggle", <Tile bg="#b8b8b6"><path d="M7 3h10v18H7z" fill="#181818" /><path d="M9 5h6v7H9z" fill="#e8e8e8" /></Tile>],
        ["Graph", <Tile bg="#888"><path d="M2 2h20v9H2z" fill="#c4c4c4" stroke="none" /><path d="M13 2l-5 4 8-1-6 4" stroke="#888" strokeWidth="2" /><path d="M15 13H9l-1 4h5v5" stroke="#222" strokeWidth="3" /></Tile>],
        ["Knob", <svg width="24" height="24"><circle cx="12" cy="12" r="11" fill="#909090" stroke="#333" /><circle cx="11.500" cy="12" r="8" fill="#34383c" stroke="#c0c0c0" /><path d="M16 6l6 6-6 6z" fill="#282a2c" /></svg>],
        ["List", <Tile bg="#a8a8a6"><path d="M3.500 4.500h17v3h-17zM3.500 10.500h17v3h-17zM3.500 16.500h17v3h-17z" fill="#e8e8e6" /></Tile>],
      ] },
      { cols: 1, items: [
        ["Gradient", <Tile bg="#f04cb4"><path d="M2 2h7v7H2z" fill="#f8b0d0" stroke="none" /><path d="M9 3h6v6H9zM3 9h5v6H3z" fill="#f478b8" stroke="none" /><path d="M14 2h8v11h-8z" fill="#d02898" stroke="none" /><path d="M1 15.500h22" /><path d="M1 13.500l3 2-3 2z" fill="#fff" /><circle cx="16.500" cy="15.500" r="2" fill="#fff" /></Tile>],
        ["Swatch", <Tile bg="#70c818"><path d="M2 2h5v5H2zM12 2h5v5h-5zM7 7h5v5H7z" fill="#a8e858" stroke="none" /><path d="M2 2h5v3H2z" fill="#e8f8d8" stroke="none" /><path d="M7 12h5v10H7z" fill="#184010" stroke="none" /><path d="M17 2h5v5h-5zM2 12h5v5H2zM12 12h5v5h-5z" fill="#389018" stroke="none" /><path d="M17 17h5v5h-5z" fill="#50f0b8" stroke="none" /></Tile>],
      ] },
    ],
  },
  {
    title: "Util",
    more: true,
    groups: [
      { cols: 1, items: [
        ["Cherry Picker", <svg width="24" height="24" fill="none"><path d="M15 2q-6 6-9 12M15 2q2 8 3 13" stroke="#603010" /><path d="M5 5q5-6 10-3-2 7-10 3z" fill="#60b828" stroke="#205010" /><circle cx="6.500" cy="16" r="4.500" fill="#e01818" stroke="#600" /><circle cx="17" cy="18" r="4.500" fill="#e01818" stroke="#600" /><circle cx="5" cy="15" r="1" fill="#fff" /><circle cx="16" cy="17" r="1" fill="#fff" /></svg>],
        ["Param Viewer", <Tile bg="#a8a8a6"><path d="M12 21V11M12 15L7 9M12 14l5-6M12 12L9 4M12 12l3-8M4 12l6 1M20 11l-6 3M4 7l6 5M20 7l-5 4M7 4l4 6M18 4l-5 6" strokeWidth="1.500" /><path d="M4 8l4-3M20 10l-3-5M5 5l3 1M11 4l3 2" /><path d="M2 21h20v2H2z" fill="#111" /></Tile>],
      ] },
      { cols: 1, items: [
        ["Data Input", <svg width="24" height="24"><path d="M2.500 8.500h10v-4l9 7.500-9 7.500v-4h-10l2-3.500z" fill="#505458" stroke="#181818" /></svg>],
        ["Data Output", <svg width="24" height="24"><path d="M2.500 8.500h10v-4l9 7.500-9 7.500v-4h-10l2-3.500z" fill="#f4f4f0" stroke="#606060" /></svg>],
      ] },
      { cols: 1, items: [
        ["Relay", <svg width="24" height="24"><circle cx="9.500" cy="10" r="7.500" fill="#b0b0b0" stroke="#555" /><circle cx="9" cy="8" r="3" fill="#e4e4e4" /><circle cx="10" cy="12" r="2" fill="#666" /><ellipse cx="16" cy="15.500" rx="5.500" ry="6.500" fill="#e83890" stroke="#702048" transform="rotate(25 16 15)" /><path d="M13 12l4-2 2 3-5 3z" fill="#f8c0d8" /></svg>],
        ["Galapagos", <svg width="24" height="24"><path d="M8.500 2.500h5l-1 1v7l6 9q0 2-2 2h-11q-2 0-2-2l6-9v-7z" fill="#f6f0f2" stroke="#605058" /><path d="M7 14h8l3 6q0 1-1.500 1h-11Q4 21 4 20z" fill="#d83880" /></svg>],
      ] },
    ],
  },
];

const Arrow = () => <svg width="7" height="4"><path d="M0 0h7L3.500 4z" fill="#111" /></svg>;

const OpenIcon = () => (
  <svg width="22" height="24" fill="none"><path d="M4.500 10L7 2.500h8.500V4H17v6" fill="#f8f8f8" stroke="#606468" /><path d="M2.500 10.500h7l1-2h9v14h-17z" fill="#68c840" stroke="#206818" /><path d="M3 14h16v3H3z" fill="#b8ec88" /></svg>
);
const SaveIcon = () => (
  <svg width="24" height="24" fill="none"><path d="M1.500 1.500h21v21h-19l-2-2z" fill="#2474e0" stroke="#08306c" /><path d="M5 2h14v10H5z" fill="#e8e8e4" /><path d="M6 5.500h12M6 8.500h12" stroke="#b8b8b4" /><path d="M6 15h12v7H6z" fill="#c0c4cc" /><path d="M8 16h4v5H8z" fill="#104090" /></svg>
);
const ExtentsIcon = () => (
  <svg width="20" height="20" fill="none" stroke="#181818" strokeWidth="3"><path d="M2 7V2h5M13 2h5v5M18 13v5h-5M7 18H2v-5" /><path d="M8 8l4 4M12 8l-4 4" strokeWidth="1.500" /></svg>
);
const EyeIcon = () => (
  <svg width="24" height="20" fill="none"><path d="M1.500 10Q12-2 22.500 10 12 21 1.500 10z" fill="#f8fafc" stroke="#102030" strokeWidth="1.500" /><circle cx="12" cy="9.500" r="6" fill="#4898d8" stroke="#184878" /><circle cx="12" cy="9.500" r="3" fill="#081018" /><circle cx="11" cy="8" r="1.500" fill="#fff" /></svg>
);
const SketchIcon = () => (
  <svg width="24" height="24" fill="none"><path d="M1 10q4-5 4 0t-2 7q0 5 7 4" stroke="#301808" strokeWidth="1.500" /><path d="M19 3l3 6-8 10-7 2 2-7z" fill="#e03828" stroke="#881008" /><path d="M18 5l-7 9" stroke="#f8a898" strokeWidth="2" /><path d="M8 20l1-5 4 4z" fill="#401808" /></svg>
);
const ShadeIcon = () => (
  <svg width="22" height="24"><path d="M2 16q0-3 3-4h12q3 1 3 4 0 4-9 6-9-2-9-6z" fill="#303234" /><path d="M3 8l6-6 8 2 1 7-6 4-8-2z" fill="#e4e4e4" stroke="#888" /><path d="M10 4l6 0 2 6-4 2z" fill="#aaa" /></svg>
);
const WireIcon = () => (
  <svg width="24" height="24" fill="none" stroke="#222"><path d="M2 14L12 3q4-2 8 2 4 4 2 7L12 21q-3 2-7-1-4-3-3-6z" /><ellipse cx="16" cy="8" rx="6" ry="3.500" transform="rotate(45 16 8)" /><ellipse cx="16" cy="8" rx="3.500" ry="2" transform="rotate(45 16 8)" stroke="#666" /><ellipse cx="7.500" cy="16" rx="5" ry="3" transform="rotate(45 7.500 16)" stroke="#666" /></svg>
);
const TerrainIcon = () => (
  <svg width="20" height="16">
    <defs>
      <linearGradient id="terrain" x1="0" y1="0" x2="0" y2="1">
        <stop offset=".1" stopColor="#f01818" />
        <stop offset=".4" stopColor="#e838a0" />
        <stop offset=".6" stopColor="#b868e8" />
        <stop offset="1" stopColor="#48b8f8" />
      </linearGradient>
    </defs>
    <path d="M1.500 9L10 1.500l8.500 6v7.500L1.500 10.500z" fill="url(#terrain)" stroke="#501028" />
  </svg>
);
const RainbowIcon = () => (
  <svg width="24" height="24">
    <rect width="24" height="24" fill="#102468" />
    <path d="M8 0h16v12H12z" fill="#28581c" />
    <path d="M14 7q6-1 10 0v12z" fill="#60b020" />
    <path d="M7 1q-4 7 1 12l2-1q-2-4 1-7 4-2 8 0-4-5-12-4z" fill="#2890b0" />
    <path d="M10 5q-3 5 0 8l3-1q-1-2 1-4z" fill="#48b838" />
    <path d="M10 9q2-2 5 0l9 11v4H14L8 14z" fill="#f08018" />
    <path d="M12 7q3-1 5 3l7 9v3L12 11z" fill="#f4e030" />
    <path d="M0 18q5-5 9-4l9 10H0z" fill="#e01c18" />
    <path d="M0 16q5-4 9-2-4 1-9 6z" fill="#801058" />
    <path d="M4 24q2-4 8-5l3 5z" fill="#f04818" />
  </svg>
);
const BoxIcon = () => (
  <svg width="24" height="24"><path d="M2 8l3-5h14l3 5v13H2z" fill="#d89850" stroke="#8a5420" /><path d="M3 9h18v11H3z" fill="#e8ac64" /><path d="M9.500 3h5v9l-2-1-1 1-2-1z" fill="#9c5c20" /></svg>
);
const PlusIcon = () => (
  <svg width="10" height="10"><path d="M3.500.5h3v3h3v3h-3v3h-3v-3h-3v-3h3z" fill="#fff" stroke="#777" /></svg>
);

const Grip = ({ x, y, d }: { x: number; y: number; d: 1 | -1 }) => (
  <path d={`M${x} ${y - 4}a4 4 0 0 ${d > 0 ? 1 : 0} 0 8`} fill="#f4f4f2" stroke="#0c0c0c" strokeWidth="2" />
);

const Balloon = ({ x, y }: { x: number; y: number }) => (
  <g transform={`translate(${x} ${y})`}>
    <path d="M2.500.5h13l2 2v10l-2 2h-4l-2.500 3-2-3h-4l-2-2v-10z" fill="#f4a020" stroke="#806010" />
    <path d="M2 1.500h14v6H2z" fill="#f8dc50" />
    <path d="M2 1.500h14v2H2z" fill="#f8f0b8" />
  </g>
);

const Wires = () => (
  <CanvasLayer aria-hidden>
    <defs>
      <linearGradient id="wire" gradientUnits="userSpaceOnUse" x1="940" x2="1072" y1="0" y2="0">
        <stop offset=".1" stopColor="#ee6818" />
        <stop offset=".3" stopColor="#f09a20" />
        <stop offset=".6" stopColor="#b0a430" />
        <stop offset=".9" stopColor="#98d818" />
      </linearGradient>
    </defs>
    <g transform="translate(-607 -198)" fill="none">
      <path d="M968 267.500H1058M941 425.500H964" stroke="#ee6818" strokeWidth="3" />
      <path d="M941 341.500C985 341.500 1020 336.500 1070 336.500" stroke="url(#wire)" strokeWidth="3" />
      <Grip x={786} y={277} d={-1} /><Grip x={965} y={267} d={1} /><Grip x={965} y={287} d={1} />
      <Grip x={792} y={351} d={-1} /><Grip x={938} y={341} d={1} /><Grip x={938} y={361} d={1} />
      <Grip x={853} y={425} d={-1} /><Grip x={937} y={425} d={1} />
      <Grip x={1060} y={267} d={-1} /><Grip x={1111} y={267} d={1} />
      <Grip x={1073} y={336} d={-1} /><Grip x={1124} y={336} d={1} />
      <Grip x={967} y={425} d={-1} /><Grip x={1018} y={425} d={1} />
    </g>
  </CanvasLayer>
);

const Overlay = () => (
  <CanvasLayer aria-hidden>
    <g transform="translate(-607 -198)">
      <Balloon x={1093} y={240} />
      <Balloon x={1106} y={309} />
      <Balloon x={1000} y={398} />
      <path d="M887.500 438.500v15l3.500-3 3 5.500 2.500-1-2.500-6h4.500z" fill="#fff" stroke="#303848" />
    </g>
  </CanvasLayer>
);

/* ---------- windows ---------- */

const menus = ["文件(F)", "编辑(E)", "查看(V)", "曲线(C)", "曲面(S)", "实体(O)", "网格(M)", "尺寸标注(D)", "变动(T)", "工具(L)"];
const toolTabs = ["标准", "工作平面", "设定视图", "显示", "选取", "工作视窗配置", "可见性", "变动", "曲线工具", "曲面工具"];
const toggles: [string, number, boolean][] = [
  ["锁定格点", 61, false], ["正交", 36, false], ["平面模式", 61, true], ["物件锁点", 61, true], ["智慧轨迹", 61, false],
  ["操作轴", 49, true], ["记录建构历史", 86, false], ["过滤器", 49, false], ["i", 8, false],
];

const RhinoWindow = () => (
  <RhinoFrame>
    <TitleBar $h={27}>
      <RhinoLogo />
      <TitleText>未命名 - Undefined (Undefined) (64-bit) - [Perspective]</TitleText>
    </TitleBar>
    <Client>
      <RhinoMenu>{menus.map((m) => <MenuButton key={m}>{m}</MenuButton>)}</RhinoMenu>
      <CommandArea onSubmit={(e) => e.preventDefault()}>
        <CommandGrip>
          <History>移动物件，快按<Mono> Alt </Mono>键可以复制物件<Mono>:</Mono></History>
          <Prompt>指令:<CommandInput /></Prompt>
        </CommandGrip>
      </CommandArea>
      <TabStrip>{toolTabs.map((t) => <ToolTab key={t} $on={t === "工作视窗配置"}>{t}</ToolTab>)}</TabStrip>
      <Toolbar>
        {topTools.map((t, i) =>
          t.icon ? <IconButton key={i} $w={t.w} aria-label={t.name}>{t.icon}</IconButton> : <ToolSep key={i} />
        )}
      </Toolbar>
      <RhinoBody>
        <ToolBox>
          <ToolRule />
          <ToolGrid>{sideTools.map(([n, icon]) => <ToolCell key={n + "-tool"} aria-label={n}>{icon}</ToolCell>)}</ToolGrid>
        </ToolBox>
        <ViewColumn>
          <Viewport>
            <Scene />
            <ViewLabel>
              <ViewName>Perspective</ViewName>
              <IconButton $w={10} $h={17} aria-label="视图菜单"><Arrow /></IconButton>
            </ViewLabel>
          </Viewport>
          <ViewTabs>
            {["Perspective", "Top", "Front", "Right"].map((v) => <ViewTab key={v} $on={v === "Perspective"}>{v}</ViewTab>)}
            <ViewTab $on aria-label="新增视图"><PlusIcon /></ViewTab>
          </ViewTabs>
        </ViewColumn>
        <SidePanels>
          <SidePanel $w={39} />
          <SidePanel $w={52}>
            <svg width="50" height="58"><path d="M19 37.500h6" stroke="#111" /><path d="M36 46h7l-3.500 3z" fill="#444" /><circle cx="23" cy="56" r="2" fill="none" stroke="#111" /></svg>
          </SidePanel>
        </SidePanels>
      </RhinoBody>
      <StatusBar>
        <StatusCell $w={60}>工作平面</StatusCell>
        <StatusCell $w={74} $left><Mono>x 99315.666</Mono></StatusCell>
        <StatusCell $w={74} $left><Mono>y -93502.232</Mono></StatusCell>
        <StatusCell $w={74}><Mono>z 0.000</Mono></StatusCell>
        <StatusCell $w={74}>毫米</StatusCell>
        <StatusCell $w={146} $left><Swatch />预设值</StatusCell>
        {toggles.map(([t, w, b]) => <StatusToggle key={t} $w={w} $bold={b}>{t}</StatusToggle>)}
      </StatusBar>
    </Client>
  </RhinoFrame>
);

const GrasshopperWindow = () => (
  <GrassFrame>
    <TitleBar $h={27}>
      <TitleGlass aria-hidden>
        <defs><filter id="soft"><feGaussianBlur stdDeviation="4" /></filter></defs>
        <g transform="translate(-606 -12)" filter="url(#soft)">
          <path d="M790 8h92l8 20-8 14h-46l-10-18-30-6z" fill="#35496a" />
          <ellipse cx="860" cy="27" rx="24" ry="12" fill="#101824" />
          <path d="M900 6h140v14l-20 24h-30l-30-20-40-4z" fill="#5b7394" />
          <circle cx="960" cy="23" r="6" fill="#98a8c0" />
          <path d="M985 40l20-24h16l14 26z" fill="#90bcf4" />
          <path d="M1032 6h90l-6 34h-14l-8-8-12 10h-24l-26-22z" fill="#0e1626" />
        </g>
      </TitleGlass>
      <TitleText>Grasshopper - unnamed</TitleText>
    </TitleBar>
    <GrassClient>
      <GrassMenu>{["File", "Edit", "View", "Display", "Solution", "Help"].map((m) => <MenuButton key={m}>{m}</MenuButton>)}</GrassMenu>
      <Categories>
        {["Prm", "Math", "Set", "Vec", "Crv", "Srf", "Msh", "Int", "T", "D", "S", "W", "H", "K", "L", "H", "U"].map((c, i) => (
          <Category key={i} $on={i === 0}>{c}</Category>
        ))}
      </Categories>
      <Ribbon>
        {ribbon.map((p) => (
          <RibbonPanel key={p.title}>
            <RibbonIcons>
              {p.groups.map((g, i) => (
                <RibbonGroup key={i} $cols={g.cols}>
                  {g.items.map(([n, icon]) => <IconButton key={n} aria-label={n}>{icon}</IconButton>)}
                </RibbonGroup>
              ))}
            </RibbonIcons>
            <RibbonTitle>
              {p.title}
              {p.more && <More aria-label="More"><svg width="8" height="8"><path d="M4 0v7M1 4h6M2 5l2 2 2-2" stroke="#aaa" fill="none" /></svg></More>}
            </RibbonTitle>
          </RibbonPanel>
        ))}
      </Ribbon>
      <CanvasBar>
        <IconButton $w={32} aria-label="Open"><OpenIcon /></IconButton>
        <IconButton $w={30} aria-label="Save"><SaveIcon /></IconButton>
        <ToolSep />
        <ZoomBox>
          <select aria-label="Zoom" defaultValue="100%"><option>100%</option><option>50%</option></select>
          <Arrow />
        </ZoomBox>
        <IconButton aria-label="Zoom extents"><ExtentsIcon /></IconButton>
        <IconButton $w={10} aria-label="Extents options"><svg width="5" height="3"><path d="M0 0h5L2.500 3z" /></svg></IconButton>
        <IconButton $w={32} aria-label="Preview"><EyeIcon /></IconButton>
        <IconButton $w={10} aria-label="Preview options"><svg width="5" height="3"><path d="M0 0h5L2.500 3z" /></svg></IconButton>
        <IconButton $w={32} aria-label="Sketch"><SketchIcon /></IconButton>
        <Grow />
        <IconButton $w={30} aria-label="Shaded"><ShadeIcon /></IconButton>
        <IconButton aria-label="Wireframe"><WireIcon /></IconButton>
      </CanvasBar>
      <Canvas>
        <Wires />
        <NodeBox $x={179} $y={57} $w={179} $h={45}>
          <span>mesh地形</span><TerrainIcon />
          <Outputs><span>输出分析物体</span><span>坡度范围（度）</span></Outputs>
        </NodeBox>
        <NodeBox $x={185} $y={131} $w={147} $h={45}>
          <span>mesh地形</span><TerrainIcon />
          <Outputs><span>分析输出</span><span>高程范围</span></Outputs>
        </NodeBox>
        <NodeBox $x={246} $y={213} $w={84} $h={29}>
          <span>Geo</span><RainbowIcon /><Outputs><span>M</span></Outputs>
        </NodeBox>
        <ParamBox $x={453} $y={57}><MeshGlyph /></ParamBox>
        <ParamBox $x={466} $y={126} $selected><MeshGlyph /></ParamBox>
        <ParamBox $x={360} $y={215}><MeshGlyph /></ParamBox>
        <Recent>
          <IconButton aria-label="Recent panel"><Scribble /></IconButton>
          <IconButton aria-label="Recent mesh"><MeshGlyph /></IconButton>
          <IconButton aria-label="Recent geometry"><BoxIcon /></IconButton>
          <IconButton aria-label="Recent surface"><PatchGlyph /></IconButton>
        </Recent>
        <Overlay />
      </Canvas>
      <GrassStatus>...</GrassStatus>
    </GrassClient>
  </GrassFrame>
);

export default function App() {
  return (
    <Desktop>
      <GlobalStyle />
      <Scenery />
      <DesktopLabel $top={12}>11.g</DesktopLabel>
      <DesktopLabel $top={110}>12.g</DesktopLabel>
      <DesktopLabel $top={208}>13.g</DesktopLabel>
      <DesktopLabel $top={404}>Q图</DesktopLabel>
      <DesktopLabel $top={420}>602</DesktopLabel>
      <DesktopLabel $top={502}>14.g</DesktopLabel>
      <RhinoWindow />
      <GrasshopperWindow />
    </Desktop>
  );
}
